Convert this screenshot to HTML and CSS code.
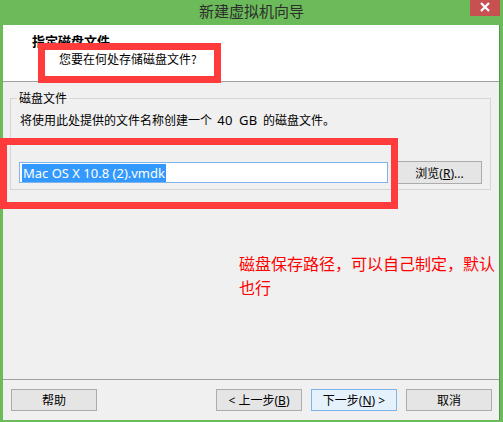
FILE: index.html
```html
<!DOCTYPE html>
<html lang="zh-CN">
<head>
    <meta charset="UTF-8">
    <title>新建虚拟机向导</title>
    <link rel="stylesheet" href="styles.css">
</head>
<body>
<div class="window">
    <div class="titlebar">
        新建虚拟机向导
        <div class="close">
            <svg width="30" height="16" viewBox="0 0 30 16">
                <path d="M11 3 L19 11 M19 3 L11 11" stroke="#fff" stroke-width="2.2" fill="none"/>
            </svg>
        </div>
    </div>

    <div class="client">
        <div class="header">
            <div class="step-title">指定磁盘文件</div>
            <div class="step-sub">您要在何处存储磁盘文件?</div>
        </div>

        <fieldset class="group">
            <legend>磁盘文件</legend>
            <div class="desc">将使用此处提供的文件名称创建一个 <span class="num">40 GB</span> 的磁盘文件。</div>
            <div class="file-row">
                <div class="field"><span class="sel">Mac OS X 10.8 (2).vmdk</span></div>
                <button class="btn browse">浏览(<u>R</u>)...</button>
            </div>
        </fieldset>

        <div class="note">磁盘保存路径，可以自己制定，默认也行</div>

        <div class="footer">
            <button class="btn help">帮助</button>
            <button class="btn">&lt; 上一步(<u>B</u>)</button>
            <button class="btn default">下一步(<u>N</u>) &gt;</button>
            <button class="btn">取消</button>
        </div>
    </div>

    <!-- annotation boxes drawn over the screenshot -->
    <div class="mark mark-sub"></div>
    <div class="mark mark-file"></div>
</div>
</body>
</html>
```

FILE: styles.css
```css
* {
    box-sizing: border-box;
}

body {
    margin: 0;
    font-family: "Noto Sans", "Noto Sans CJK SC", sans-serif;
    font-size: 12px;
    color: #000;
}

.window {
    position: relative;
    width: 503px;
    height: 422px;
    background: #6cbb5a;
    padding: 0 3px 2px 3px;
}

.titlebar {
    height: 25px;
    line-height: 21px;
    text-align: center;
    font-family: "Noto Sans CJK SC", sans-serif;
    font-size: 15px;
    color: #2d2d2d;
}

.close {
    position: absolute;
    top: 0;
    right: 3px;
    width: 30px;
    height: 16px;
    background: #c75050;
}

.close svg {
    display: block;
}

.client {
    height: 395px;
    background: #f0f0f0;
    border-right: 1px solid #4f9a43;
    display: flex;
    flex-direction: column;
}

.header {
    height: 57px;
    background: #fff;
    border-bottom: 1px solid #a0a0a0;
    padding: 7px 0 0 29px;
    font-family: "Noto Sans CJK SC", sans-serif;
}

.step-title {
    font-size: 13px;
    font-weight: bold;
    line-height: 17px;
}

.step-sub {
    margin: 2px 0 0 27px;
    line-height: 16px;
}

.group {
    margin: 8px 0 0 7px;
    width: 481px;
    padding: 0 0 5px 0;
    border: 1px solid #d5d5d5;
}

.group legend {
    margin-left: 6px;
    padding: 0 2px;
    line-height: 16px;
    font-family: "Noto Sans CJK SC", sans-serif;
}

.desc {
    margin: 6px 0 0 9px;
    line-height: 16px;
    word-spacing: 2px;
}

.num {
    font-size: 13px;
    letter-spacing: 0.5px;
}

.file-row {
    display: flex;
    align-items: center;
    margin: 32px 0 0 8px;
}

.field {
    width: 369px;
    height: 21px;
    background: #fff;
    border: 1px solid #7eb4ea;
    padding: 0 0 0 2px;
    display: flex;
    align-items: center;
}

.sel {
    background: #3399ff;
    color: #fff;
    font-size: 13px;
    line-height: 18px;
    padding: 0 1px;
}

.btn {
    font-family: "Noto Sans", "Noto Sans CJK SC", sans-serif;
    font-size: 12px;
    color: #000;
    width: 86px;
    height: 22px;
    padding: 0;
    background: #e5e5e5;
    border: 1px solid #acacac;
    border-radius: 0;
}

.btn u {
    text-decoration: underline;
}

.browse {
    margin-left: 9px;
    width: 85px;
    height: 23px;
}

.note {
    margin: 61px 0 0 236px;
    width: 258px;
    font-family: "Noto Sans CJK SC", sans-serif;
    font-size: 16px;
    line-height: 24px;
    color: #ff0000;
}

.footer {
    margin-top: auto;
    border-top: 1px solid #a0a0a0;
    padding: 9px 7px 9px 8px;
    display: flex;
    gap: 9px;
}

.help {
    margin-right: auto;
}

.default {
    background: #e5f1fb;
    border-color: #7eb4ea;
}

.mark {
    position: absolute;
    border: 7px solid #ff3b3b;
}

.mark-sub {
    left: 38px;
    top: 43px;
    width: 183px;
    height: 40px;
}

.mark-file {
    left: 0;
    top: 138px;
    width: 398px;
    height: 71px;
}
```
